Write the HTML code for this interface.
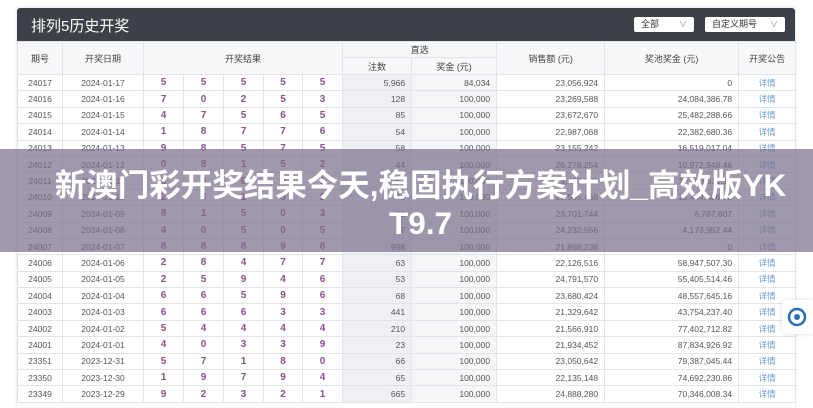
<!DOCTYPE html><html><head><meta charset="utf-8"><style>
body{margin:0;width:813px;height:400px;overflow:hidden;background:#fff;font-family:"Liberation Sans","Noto Sans CJK SC",sans-serif;position:relative}
.panel{position:absolute;left:17px;top:8px;width:778px;height:400px;background:#fff;box-shadow:0 0 3px rgba(0,0,0,.15)}
.hd{position:absolute;left:0;top:0;width:778px;height:33px;background:#3c4047;border-radius:3px 3px 0 0}
.hd .t{position:absolute;left:14px;top:7px;color:#fff;font-size:15px}
.sel{position:absolute;top:9px;height:15px;background:#fff;border-radius:2px;font-size:9px;color:#333;line-height:15px;padding-left:7px;box-sizing:border-box}
.sel span{position:absolute;right:7px;color:#888;font-size:8px}
table{position:absolute;left:0;top:33px;border-collapse:collapse;table-layout:fixed;width:778px;font-size:8.5px;color:#555}
td,th{border:1px solid #e2e4e8;padding:0;height:15.4px;text-align:center;white-space:nowrap;overflow:hidden}
th{font-weight:normal;background:#f7f8fa;color:#444;font-size:9px}
.b{color:#8a4f8d;font-weight:bold;font-size:10px}
.r{text-align:right;padding-right:6px}
.g{background:#eef0f3}
.g2{background:#f5f6f8}
.l{color:#6a9bd0}
.ov{position:absolute;left:0;top:149px;width:813px;height:103px;background:rgba(125,112,142,.72)}
.ov div{position:absolute;left:14px;width:813px;text-align:center;color:#fff;font-weight:bold;font-size:31.5px;white-space:nowrap;font-family:"Liberation Sans","Noto Sans CJK SC",sans-serif}
.fl{position:absolute;left:782px;top:300px;width:31px;height:34px;background:#fff;border-radius:6px 0 0 6px;box-shadow:0 0 4px rgba(0,0,0,.15)}
</style></head><body>
<div class="panel">
<div class="hd"><div class="t">排列5历史开奖</div>
<div class="sel" style="left:617px;width:60px">全部<span>∨</span></div>
<div class="sel" style="left:688px;width:80px">自定义期号<span>∨</span></div></div>
<table>
<colgroup><col style="width:45px"><col style="width:81px"><col style="width:40px"><col style="width:40px"><col style="width:40px"><col style="width:39px"><col style="width:40px"><col style="width:69px"><col style="width:85px"><col style="width:108px"><col style="width:134px"><col style="width:57px"></colgroup>
<tr><th rowspan="2" style="height:32px">期号</th><th rowspan="2">开奖日期</th><th rowspan="2" colspan="5">开奖结果</th><th colspan="2" style="height:15px">直选</th><th rowspan="2">销售额 (元)</th><th rowspan="2">奖池奖金 (元)</th><th rowspan="2">开奖公告</th></tr>
<tr><th style="height:15px">注数</th><th>奖金 (元)</th></tr>
<tr><td>24017</td><td>2024-01-17</td><td class="b">5</td><td class="b">5</td><td class="b">5</td><td class="b">5</td><td class="b">5</td><td class="r g">5,966</td><td class="r g2">84,034</td><td class="r">23,056,924</td><td class="r">0</td><td class="l">详情</td></tr>
<tr><td>24016</td><td>2024-01-16</td><td class="b">7</td><td class="b">0</td><td class="b">2</td><td class="b">5</td><td class="b">3</td><td class="r g">128</td><td class="r g2">100,000</td><td class="r">23,269,588</td><td class="r">24,084,386.78</td><td class="l">详情</td></tr>
<tr><td>24015</td><td>2024-01-15</td><td class="b">4</td><td class="b">7</td><td class="b">5</td><td class="b">6</td><td class="b">5</td><td class="r g">85</td><td class="r g2">100,000</td><td class="r">23,672,670</td><td class="r">25,482,288.66</td><td class="l">详情</td></tr>
<tr><td>24014</td><td>2024-01-14</td><td class="b">1</td><td class="b">8</td><td class="b">7</td><td class="b">7</td><td class="b">6</td><td class="r g">54</td><td class="r g2">100,000</td><td class="r">22,987,068</td><td class="r">22,382,680.36</td><td class="l">详情</td></tr>
<tr><td>24013</td><td>2024-01-13</td><td class="b">9</td><td class="b">8</td><td class="b">5</td><td class="b">7</td><td class="b">5</td><td class="r g">58</td><td class="r g2">100,000</td><td class="r">23,155,242</td><td class="r">16,519,017.04</td><td class="l">详情</td></tr>
<tr><td>24012</td><td>2024-01-12</td><td class="b">0</td><td class="b">8</td><td class="b">1</td><td class="b">5</td><td class="b">2</td><td class="r g">44</td><td class="r g2">100,000</td><td class="r">26,278,254</td><td class="r">10,972,948.46</td><td class="l">详情</td></tr>
<tr><td>24011</td><td>2024-01-11</td><td class="b">3</td><td class="b">3</td><td class="b">6</td><td class="b">2</td><td class="b">1</td><td class="r g">52</td><td class="r g2">100,000</td><td class="r">23,423,126</td><td class="r">12,003,511.18</td><td class="l">详情</td></tr>
<tr><td>24010</td><td>2024-01-10</td><td class="b">2</td><td class="b">8</td><td class="b">1</td><td class="b">3</td><td class="b">2</td><td class="r g">49</td><td class="r g2">100,000</td><td class="r">23,585,468</td><td class="r">13,444,686.32</td><td class="l">详情</td></tr>
<tr><td>24009</td><td>2024-01-09</td><td class="b">8</td><td class="b">1</td><td class="b">5</td><td class="b">0</td><td class="b">3</td><td class="r g">62</td><td class="r g2">100,000</td><td class="r">23,701,744</td><td class="r">6,787,807</td><td class="l">详情</td></tr>
<tr><td>24008</td><td>2024-01-08</td><td class="b">4</td><td class="b">0</td><td class="b">5</td><td class="b">0</td><td class="b">5</td><td class="r g">77</td><td class="r g2">100,000</td><td class="r">24,232,556</td><td class="r">4,173,952.44</td><td class="l">详情</td></tr>
<tr><td>24007</td><td>2024-01-07</td><td class="b">8</td><td class="b">8</td><td class="b">8</td><td class="b">9</td><td class="b">8</td><td class="r g">998</td><td class="r g2">100,000</td><td class="r">21,868,238</td><td class="r">0</td><td class="l">详情</td></tr>
<tr><td>24006</td><td>2024-01-06</td><td class="b">2</td><td class="b">8</td><td class="b">4</td><td class="b">7</td><td class="b">7</td><td class="r g">63</td><td class="r g2">100,000</td><td class="r">22,126,516</td><td class="r">58,947,507.30</td><td class="l">详情</td></tr>
<tr><td>24005</td><td>2024-01-05</td><td class="b">2</td><td class="b">5</td><td class="b">9</td><td class="b">4</td><td class="b">6</td><td class="r g">53</td><td class="r g2">100,000</td><td class="r">24,791,570</td><td class="r">55,405,514.46</td><td class="l">详情</td></tr>
<tr><td>24004</td><td>2024-01-04</td><td class="b">6</td><td class="b">6</td><td class="b">5</td><td class="b">9</td><td class="b">6</td><td class="r g">68</td><td class="r g2">100,000</td><td class="r">23,680,424</td><td class="r">48,557,645.16</td><td class="l">详情</td></tr>
<tr><td>24003</td><td>2024-01-03</td><td class="b">6</td><td class="b">6</td><td class="b">6</td><td class="b">3</td><td class="b">3</td><td class="r g">441</td><td class="r g2">100,000</td><td class="r">21,329,642</td><td class="r">43,754,237.40</td><td class="l">详情</td></tr>
<tr><td>24002</td><td>2024-01-02</td><td class="b">5</td><td class="b">4</td><td class="b">4</td><td class="b">4</td><td class="b">4</td><td class="r g">210</td><td class="r g2">100,000</td><td class="r">21,566,910</td><td class="r">77,402,712.82</td><td class="l">详情</td></tr>
<tr><td>24001</td><td>2024-01-01</td><td class="b">4</td><td class="b">0</td><td class="b">3</td><td class="b">3</td><td class="b">9</td><td class="r g">23</td><td class="r g2">100,000</td><td class="r">21,934,452</td><td class="r">87,834,926.92</td><td class="l">详情</td></tr>
<tr><td>23351</td><td>2023-12-31</td><td class="b">5</td><td class="b">7</td><td class="b">1</td><td class="b">8</td><td class="b">0</td><td class="r g">66</td><td class="r g2">100,000</td><td class="r">23,050,642</td><td class="r">79,387,045.44</td><td class="l">详情</td></tr>
<tr><td>23350</td><td>2023-12-30</td><td class="b">1</td><td class="b">9</td><td class="b">7</td><td class="b">9</td><td class="b">4</td><td class="r g">65</td><td class="r g2">100,000</td><td class="r">22,135,148</td><td class="r">74,692,230.86</td><td class="l">详情</td></tr>
<tr><td>23349</td><td>2023-12-29</td><td class="b">9</td><td class="b">2</td><td class="b">3</td><td class="b">2</td><td class="b">1</td><td class="r g">665</td><td class="r g2">100,000</td><td class="r">24,888,280</td><td class="r">70,346,008.34</td><td class="l">详情</td></tr>
</table>
</div>
<div class="ov"><div style="top:11px">新澳门彩开奖结果今天,稳固执行方案计划_高效版YK</div><div style="top:56px">T9.7</div></div>
<div class="fl"><svg width="31" height="34" viewBox="0 0 31 34"><circle cx="15" cy="17" r="8" fill="none" stroke="#2a6fb5" stroke-width="2.5"/><circle cx="15" cy="17" r="3" fill="#2a6fb5"/></svg></div>
</body></html>
